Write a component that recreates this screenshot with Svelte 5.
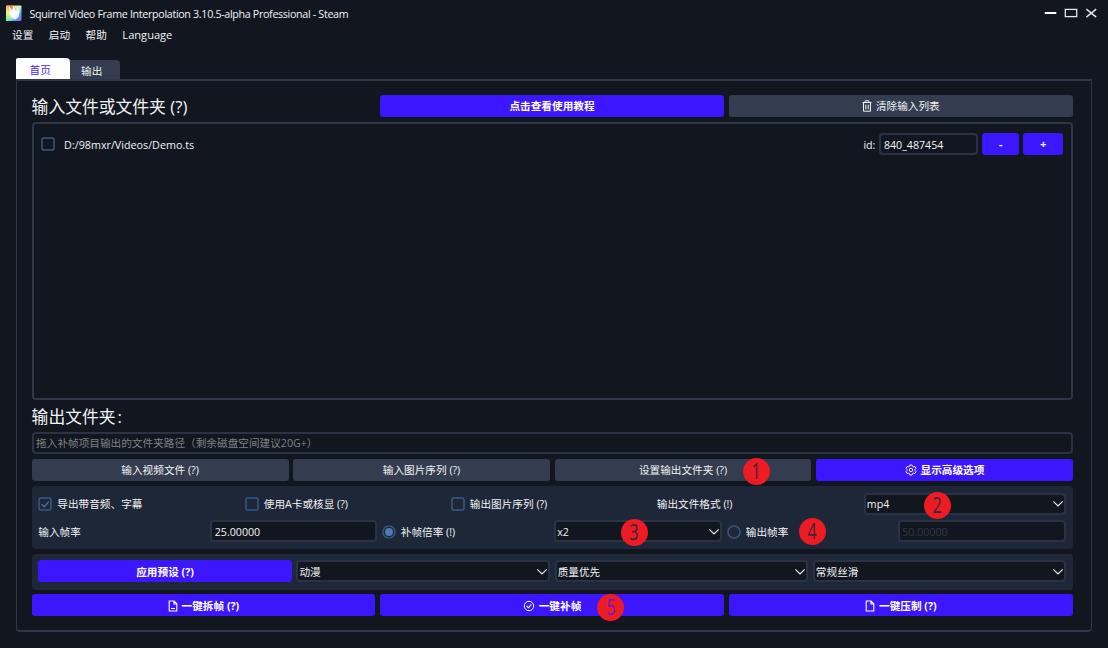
<script>
  let exportAudio = $state(true);
  let presets = [
    { id: 'kind', text: '动漫' },
    { id: 'quality', text: '质量优先' },
    { id: 'smooth', text: '常规丝滑' }
  ];
</script>

{#snippet chevron()}
  <svg class="chev" width="12" height="8" viewBox="0 0 12 8"><path d="M1.3 1.4 6 5.9l4.7-4.5" fill="none" stroke="#e6e8ea" stroke-width="1.3" /></svg>
{/snippet}

{#snippet check(on)}
  <svg class="box" width="14" height="14" viewBox="0 0 14 14">
    <rect x="1" y="1" width="12" height="12" rx="2" fill="none" stroke="#3a5985" stroke-width="1.5" />
    {#if on}<path d="M3.6 7.2 6.2 9.9l4.6-5.2" fill="none" stroke="#4f7ab4" stroke-width="1.2" />{/if}
  </svg>
{/snippet}

{#snippet radio(on)}
  <svg class="box" width="14" height="14" viewBox="0 0 14 14">
    <circle cx="7" cy="7" r="6.1" fill="none" stroke="#3a5985" stroke-width="1.4" />
    {#if on}<circle cx="7" cy="7" r="4" fill="#4f7ab4" />{/if}
  </svg>
{/snippet}

<div class="window">
  <header class="titlebar">
    <svg class="logo" width="16" height="16" viewBox="0 0 16 16">
      <defs>
        <linearGradient id="lg" x1="0" y1="0" x2="1" y2="1">
          <stop offset="0" stop-color="#ff8a50" /><stop offset=".25" stop-color="#ffe45a" />
          <stop offset=".5" stop-color="#c9f5d0" /><stop offset=".75" stop-color="#45a5ff" /><stop offset="1" stop-color="#b04cff" />
        </linearGradient>
        <linearGradient id="lh" x1="0" y1="0" x2="0" y2="1">
          <stop offset="0" stop-color="#ff9d6a" /><stop offset=".45" stop-color="#fff26a" /><stop offset="1" stop-color="#55efb0" />
        </linearGradient>
      </defs>
      <rect x="0" y="0.500" width="15.5" height="15.5" rx="1" fill="url(#lg)" />
      <rect x="0" y="0.500" width="4" height="15.5" rx="1" fill="url(#lh)" />
      <path d="M3 2l3 1 1-2 3 4 2-3 1.5 5-1 5-3 2.5L6 13 3.5 9z" fill="#fff" opacity=".93" />
      <path d="M3.5 1.5 6 5 7 1.5z" fill="#ff5a6a" />
      <path d="M9 3l1.5 3" stroke="#ff8fa8" stroke-width=".8" />
    </svg>
    <h1>Squirrel Video Frame Interpolation 3.10.5-alpha Professional - Steam</h1>
    <svg class="controls" width="54" height="12" viewBox="0 0 54 12">
      <path d="M.8 6h11.5" stroke="#fff" stroke-width="2" />
      <rect x="21.3" y="2.4" width="11.4" height="7.2" fill="none" stroke="#e6e6e6" stroke-width="1.3" />
      <path d="M42.4 2.100l9.800 8M52.200 2.100l-9.800 8" stroke="#e6e6e6" stroke-width="1.4" />
    </svg>
  </header>

  <nav class="menu">
    <span>设置</span><span>启动</span><span>帮助</span><span class="lang">Language</span>
  </nav>

  <div class="tabs">
    <div class="tab active">首页</div>
    <div class="tab">输出</div>
  </div>

  <main class="panel">
    <section class="top">
      <h2>输入文件或文件夹 (?)</h2>
      <div class="btn primary">点击查看使用教程</div>
      <div class="btn slate">
        <svg width="10" height="12" viewBox="0 0 10 12"><path d="M.5 2.5h9M3.2 2.2V.8h3.6v1.4M1.5 2.8v8.4h7V2.8M3.8 4.7v4.6M6.2 4.7v4.6" fill="none" stroke="currentColor" /></svg>
        清除输入列表
      </div>
    </section>

    <section class="list">
      <div class="item">
        {@render check(false)}
        <span class="path">D:/98mxr/Videos/Demo.ts</span>
        <span class="idlabel">id:</span>
        <div class="field id">840_487454</div>
        <div class="btn primary minus">-</div>
        <div class="btn primary plus">+</div>
      </div>
    </section>

    <h2 class="outhead">输出文件夹<span class="colon">:</span></h2>
    <div class="field hint">拖入补帧项目输出的文件夹路径（剩余磁盘空间建议20G+）</div>

    <section class="four">
      <div class="btn slate">输入视频文件 (?)</div>
      <div class="btn slate">输入图片序列 (?)</div>
      <div class="btn slate">设置输出文件夹 (?)<b class="badge b1"><i>1</i></b></div>
      <div class="btn primary">
        <svg width="12" height="12" viewBox="0 0 12 12"><path d="M4.9 1h2.2l.4 1.4 1 .5 1.4-.4L11 4.4 10 5.5v1l1 1.1-1.1 1.9-1.4-.4-1 .5L7.1 11H4.9l-.4-1.4-1-.5-1.4.4L1 7.6l1-1.1v-1L1 4.4l1.1-1.9 1.4.4 1-.5z" fill="none" stroke="currentColor" stroke-width=".95" /><circle cx="6" cy="6" r="1.7" fill="none" stroke="currentColor" stroke-width=".95" /></svg>
        显示高级选项
      </div>
    </section>

    <section class="group options">
      <div class="row a">
        <div class="opt">{@render check(exportAudio)}导出带音频、字幕</div>
        <div class="opt">{@render check(false)}使用A卡或核显 (?)</div>
        <div class="opt">{@render check(false)}输出图片序列 (?)</div>
        <div class="opt">输出文件格式 (!)</div>
        <div class="field select">mp4{@render chevron()}<b class="badge b2"><i>2</i></b></div>
      </div>
      <div class="row b">
        <div class="opt">输入帧率</div>
        <div class="field">25.00000</div>
        <div class="opt r">{@render radio(true)}补帧倍率 (!)</div>
        <div class="field select">x2{@render chevron()}<b class="badge b3"><i>3</i></b></div>
        <div class="opt r">{@render radio(false)}输出帧率<b class="badge b4"><i>4</i></b></div>
        <div class="field off">50.00000</div>
      </div>
    </section>

    <section class="group presets">
      <div class="btn primary">应用预设 (?)</div>
      {#each presets as p (p.id)}
        <div class="field select">{p.text}{@render chevron()}</div>
      {/each}
    </section>

    <section class="three">
      <div class="btn primary">
        <svg width="10" height="12" viewBox="0 0 10 12"><path d="M1.2 1h4.9l2.7 2.8V11H1.2zM6 1v3h2.8M3 8.5h4" fill="none" stroke="currentColor" stroke-width="1.1" /></svg>
        一键拆帧 (?)
      </div>
      <div class="btn primary">
        <svg width="12" height="12" viewBox="0 0 12 12"><circle cx="6" cy="6" r="4.7" fill="none" stroke="currentColor" /><path d="M3.7 6l1.7 1.8 3-3.5" fill="none" stroke="currentColor" stroke-width="1.1" /></svg>
        一键补帧<b class="badge b5"><i>5</i></b>
      </div>
      <div class="btn primary">
        <svg width="10" height="12" viewBox="0 0 10 12"><path d="M1.2 1h4.9l2.7 2.8V11H1.2zM6 1v3h2.8" fill="none" stroke="currentColor" stroke-width="1.1" /></svg>
        一键压制 (?)
      </div>
    </section>
  </main>
</div>

<style>
  :global(body) { background: #12171f; overflow: hidden; }
  .window {
    box-sizing: border-box; width: 1108px; height: 648px; background: #12171f; color: #f2f3f5;
    font-family: "Open Sans", "Noto Sans CJK SC", sans-serif; font-size: 10.65px; line-height: 16px;
    display: flex; flex-direction: column; white-space: nowrap;
  }
  .window * { box-sizing: border-box; }
  svg { display: block; flex: none; }
  .titlebar { height: 26px; display: flex; align-items: center; padding: 0 10px 0 6px; }
  h1 { margin: 0 auto 0 7.5px; padding-top: 1px; font-size: 10.7px; font-weight: 400; letter-spacing: -.32px; }
  .menu { height: 20px; display: flex; align-items: center; gap: 15.5px; padding: 0 0 2px 12px; }
  .lang { font-size: 11.1px; }
  .tabs { height: 33px; padding-left: 16px; display: flex; align-items: flex-end; }
  .tab { height: 19px; width: 50px; background: #333d4f; border-radius: 0 4px 0 0; display: flex; align-items: center; padding: 2px 0 0 11px; }
  .tab.active { width: 54px; height: 21px; background: #fff; color: #4a1fff; border-radius: 2px 4px 0 0; padding: 3px 0 0 13.5px; }
  .panel {
    width: 1076px; height: 553px; margin-left: 16px; border: solid #2d3748; border-width: 2px 1px 2px 1px; border-radius: 0 0 4px 4px;
    padding: 14px 18.1px 0 14.6px; display: flex; flex-direction: column;
  }
  h2 { margin: 0; font-size: 16.8px; line-height: 24px; font-weight: 400; }
  .top h2 { padding-top: 2px; }
  .btn { position: relative; height: 22px; border-radius: 3px; display: flex; align-items: center; justify-content: center; gap: 4px; }
  .primary { background: #3c16ff; color: #fff; font-weight: 700; }
  .slate { background: #333d4f; }
  .top { display: grid; grid-template: 22px / 343.6px 343.6px 344.1px; gap: 5px; height: 22px; align-items: center; }
  .list { height: 278px; margin-top: 5px; border: 2px solid #2d3748; border-radius: 4px; padding: 9px 7.5px 0 7.3px; }
  .item { display: flex; align-items: center; height: 22px; }
  .path { margin-left: 9.2px; margin-right: auto; padding-top: 2px; font-size: 10.75px; }
  .idlabel { margin-right: 4px; padding-top: 2px; }
  .field { position: relative; height: 22px; background: #12171f; border: 2px solid #293343; border-radius: 4px; display: flex; align-items: center; padding: 1px 2.5px 0; }
  .id { width: 98.5px; margin-right: 4.5px; }
  .minus { width: 36.5px; margin-right: 4.5px; }
  .plus { width: 40px; }
  .outhead { height: 32px; line-height: 34px; }
  .colon { margin-left: 2px; }
  .hint { color: #7d8186; padding-top: 0; }
  .four { margin-top: 5px; display: grid; grid-template-columns: repeat(4, 1fr); gap: 4.5px; }
  .group { background: #1d2737; border-radius: 4px; padding: 6px 6.7px; }
  .options { margin-top: 5px; height: 63px; padding-top: 7px; }
  .row { display: grid; height: 22px; align-items: center; }
  .a { grid-template-columns: 206.5px 206px 206px 207px 202px; }
  .a .field { padding-top: 0; }
  .b { margin-top: 5px; grid-template-columns: 172px 167px 177px 168px 175.5px 168px; }
  .opt { position: relative; display: flex; align-items: center; gap: 5px; }
  .b .opt { padding-top: 1px; }
  .b .r { padding-left: 4.5px; }
  .select { justify-content: space-between; padding: 1px 0 0 1px; }
  .off { color: #2d3748; }
  .presets { margin-top: 5px; height: 36px; display: grid; grid-template-columns: repeat(4, 253.5px); gap: 4.7px; }
  .presets .btn { padding-top: 1px; }
  .three { margin-top: 4.3px; display: grid; grid-template-columns: 343.6px 343.6px 344.1px; gap: 5px; }
  .three .btn { padding-top: 1px; }
  .badge {
    position: absolute; width: 27px; height: 27px; border-radius: 50%; background: #ed1c24; color: #3b2433;
    display: flex; align-items: center; justify-content: center; font: 400 21px/27px "Open Sans", sans-serif;
  }
  .badge i { font-style: normal; transform: scaleX(.76); }
  .b1 { left: 188.5px; top: -1px; }
  .b2 { left: 58px; top: -3px; }
  .b3 { left: 64.5px; top: -3px; }
  .b4 { left: 76.5px; top: -4.5px; }
  .b5 { left: 217px; top: -.5px; color: #6a1ccb; }
</style>
